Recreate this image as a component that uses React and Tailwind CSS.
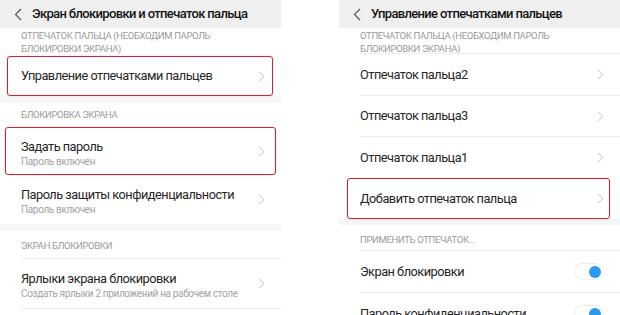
import React from 'react';

const font = { fontFamily: 'Roboto, "Noto Sans", "DejaVu Sans", sans-serif' };

const Chevron = ({ className = '' }) => (
    <svg width="7" height="11" viewBox="0 0 7 11" className={className}>
        <polyline points="1,1 6,5.5 1,10" fill="none" stroke="#c4c4c4" strokeWidth="1" />
    </svg>
);

const Back = () => (
    <svg width="8" height="13" viewBox="0 0 8 13">
        <polyline points="7,1 1.5,6.5 7,12" fill="none" stroke="#555" strokeWidth="1.2" />
    </svg>
);

const Header = ({ title }) => (
    <div className="h-[28px] bg-[#efefef] flex items-center pl-[14px] gap-[10px] shrink-0">
        <Back />
        <span className="text-[13px] font-medium text-[#151515] tracking-[-0.65px] whitespace-nowrap">{title}</span>
    </div>
);

const Label = ({ children, className = '' }) => (
    <div className={`pl-[21px] text-[9.5px] leading-[12.5px] tracking-[-0.35px] text-[#9a9a9a] uppercase shrink-0 ${className}`}>
        {children}
    </div>
);

const Band = ({ h }) => <div className={`bg-[#f6f6f6] shrink-0 ${h}`} />;

const Divider = () => (
    <div className="pl-[21px] shrink-0">
        <div className="h-px bg-[#ececec]" />
    </div>
);

const Toggle = () => (
    <div className="w-[30px] h-[17px] rounded-full bg-white border border-[#ececec] flex items-center justify-end pr-[2px]">
        <div className="w-[12px] h-[12px] rounded-full bg-[#2a9af0]" />
    </div>
);

// box = inset of the red highlight around the row
const Row = ({ title, sub, h, box, toggle }) => (
    <div className={`relative flex items-center pl-[21px] pr-[16px] shrink-0 ${h}`}>
        <div className={`flex-1 flex flex-col whitespace-nowrap ${sub ? 'self-start pt-[12px]' : ''}`}>
            <span className="text-[12.75px] tracking-[-0.5px] text-[#262626] leading-[16px]">{title}</span>
            {sub && <span className="text-[10px] tracking-[-0.35px] text-[#a3a3a3] leading-[13px]">{sub}</span>}
        </div>
        {toggle ? <Toggle /> : <Chevron />}
        {box && (
            <div className={`absolute border-[1.5px] border-[#d4232f] rounded-[3px] shadow-[0_0_2px_rgba(0,0,0,0.15)] ${box}`} />
        )}
    </div>
);

const App = () => {
    return (
        <div className="w-[620px] h-[315px] bg-white flex gap-[58px] overflow-hidden" style={font}>
            {/* left screen */}
            <div className="w-[281px] flex flex-col shrink-0">
                <Header title="Экран блокировки и отпечаток пальца" />
                <Label className="h-[28px] pt-[2px]">
                    Отпечаток пальца (необходим пароль<br />блокировки экрана)
                </Label>
                <Row title="Управление отпечатками пальцев" h="h-[40px]" box="left-[7px] right-[8px] top-0 bottom-0" />
                <Band h="h-[7px]" />
                <Label className="h-[24px] flex items-center">Блокировка экрана</Label>
                <Row title="Задать пароль" sub="Пароль включен" h="h-[48px]" box="left-[5px] right-[5px] top-0 bottom-0" />
                <Row title="Пароль защиты конфиденциальности" sub="Пароль включен" h="h-[49px]" />
                <Band h="h-[7px]" />
                <Label className="h-[27px] pt-[9px]">Экран блокировки</Label>
                <Divider />
                <Row title="Ярлыки экрана блокировки" sub="Создать ярлыки 2 приложений на рабочем столе" h="h-[49px]" />
                <Divider />
            </div>

            {/* right screen */}
            <div className="w-[281px] flex flex-col shrink-0">
                <Header title="Управление отпечатками пальцев" />
                <Label className="h-[25px] pt-[2px]">
                    Отпечаток пальца (необходим пароль<br />блокировки экрана)
                </Label>
                <Divider />
                <Row title="Отпечаток пальца2" h="h-[41px]" />
                <Divider />
                <Row title="Отпечаток пальца3" h="h-[40px]" />
                <Divider />
                <Row title="Отпечаток пальца1" h="h-[41px]" />
                <Row title="Добавить отпечаток пальца" h="h-[41px]" box="left-[8px] right-[10px] top-0 bottom-0" />
                <Band h="h-[6px]" />
                <Label className="h-[25px] pt-[9px]">Применить отпечаток...</Label>
                <Divider />
                <Row title="Экран блокировки" h="h-[41px]" toggle />
                <Divider />
                <Row title="Пароль конфиденциальности" h="h-[41px]" toggle />
            </div>
        </div>
    );
};

export default App;
